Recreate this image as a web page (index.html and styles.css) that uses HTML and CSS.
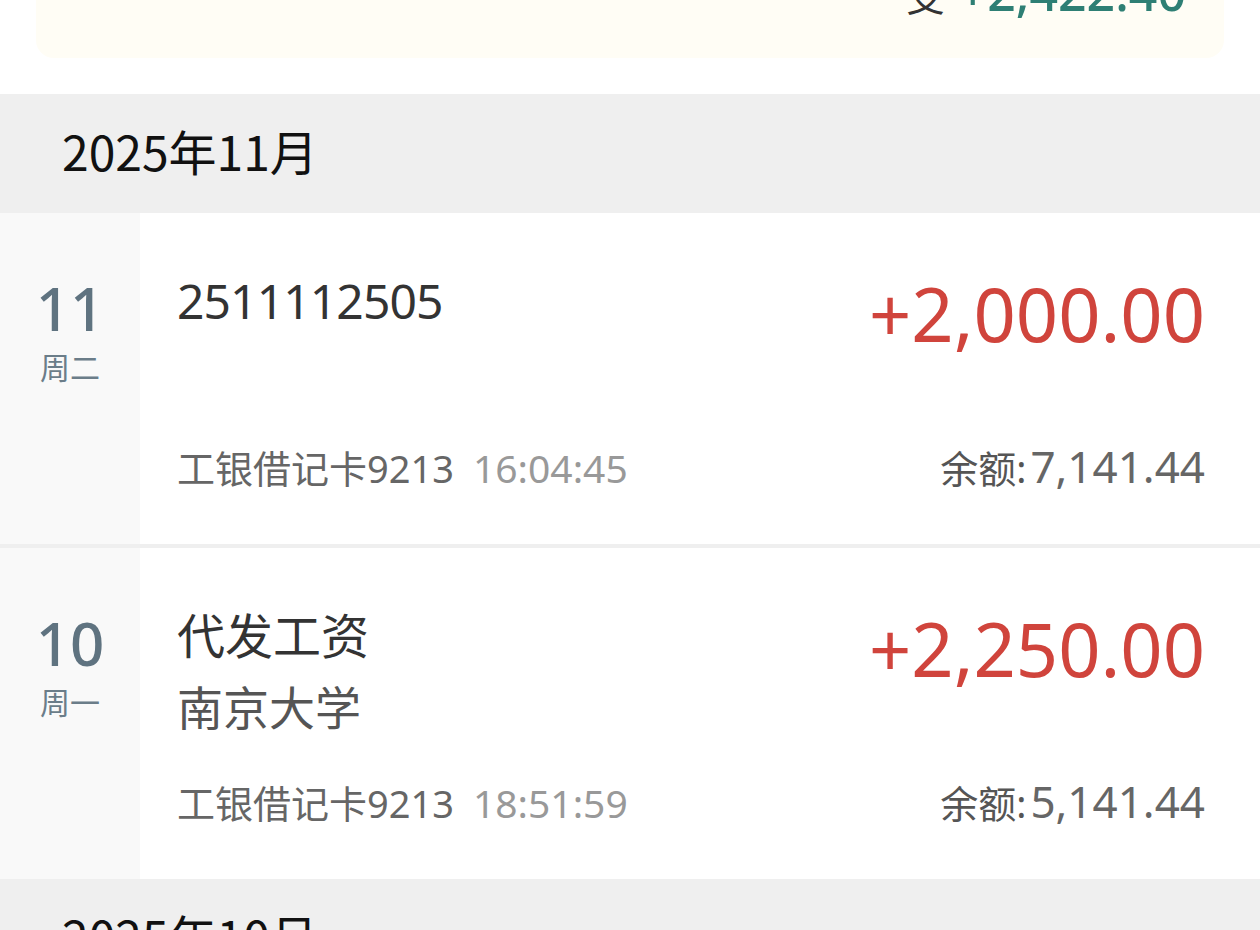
FILE: index.html
```html
<!DOCTYPE html>
<html lang="zh-CN">
<head>
<meta charset="utf-8">
<title>账单明细</title>
<link rel="stylesheet" href="styles.css">
</head>
<body>
  <div class="summary">
    <div class="summary-line">
      <span class="summary-label">支</span>
      <span class="summary-amount">+2,422.40</span>
    </div>
  </div>

  <section class="month">
    <div class="month-head">2025年11月</div>

    <div class="txn">
      <div class="date">
        <div class="day">11</div>
        <div class="week">周二</div>
      </div>
      <div class="body">
        <div class="top">
          <div class="desc">
            <div class="title title-num">2511112505</div>
          </div>
          <div class="amount">+2,000.00</div>
        </div>
        <div class="meta">
          <div class="card">工银借记卡9213<span class="time">16:04:45</span></div>
          <div class="balance"><span class="bal-label">余额:</span><span class="bal-num">7,141.44</span></div>
        </div>
      </div>
    </div>

    <div class="txn">
      <div class="date">
        <div class="day">10</div>
        <div class="week">周一</div>
      </div>
      <div class="body">
        <div class="top">
          <div class="desc">
            <div class="title">代发工资</div>
            <div class="subtitle">南京大学</div>
          </div>
          <div class="amount">+2,250.00</div>
        </div>
        <div class="meta">
          <div class="card">工银借记卡9213<span class="time">18:51:59</span></div>
          <div class="balance"><span class="bal-label">余额:</span><span class="bal-num">5,141.44</span></div>
        </div>
      </div>
    </div>
  </section>

  <section class="month">
    <div class="month-head">2025年10月</div>
  </section>
</body>
</html>
```
FILE: styles.css
```css
html, body {
  margin: 0;
  padding: 0;
  background: #ffffff;
}
body {
  font-family: "Noto Sans", "Noto Sans CJK SC", sans-serif;
  color: #333;
  overflow: hidden;
}

.summary {
  margin: -38px 36px 36px;
  padding: 0 38px 32px 0;
  background: #fffdf5;
  border-radius: 0 0 18px 18px;
}
.summary-line {
  display: flex;
  justify-content: flex-end;
  align-items: baseline;
  line-height: 60px;
}
.summary-label {
  font-size: 38px;
  color: #333;
  margin-right: 14px;
}
.summary-amount {
  font-size: 50px;
  color: #2e7f74;
  font-weight: 500;
}

.month-head {
  height: 119px;
  box-sizing: border-box;
  display: flex;
  align-items: center;
  padding: 0 0 7px 62px;
  background: #efefef;
  font-family: "Noto Sans CJK SC", sans-serif;
  font-size: 48px;
  color: #111;
}

.txn {
  display: grid;
  grid-template-columns: 140px 1fr;
  border-bottom: 4px solid #efefef;
}
.txn:last-child {
  border-bottom: none;
}

.date {
  background: #f9f9f9;
  text-align: center;
  padding-top: 60px;
}
.day {
  font-size: 60px;
  line-height: 70px;
  font-weight: 500;
  color: #5f7380;
}
.week {
  margin-top: 5px;
  font-size: 30px;
  line-height: 40px;
  color: #6b7d89;
}

.body {
  padding: 58px 55px 53px 37px;
}
.top {
  min-height: 170px;
  display: flex;
  justify-content: space-between;
  align-items: flex-start;
}
.title {
  font-size: 48px;
  line-height: 60px;
  color: #333;
}
.title-num {
  letter-spacing: -0.9px;
}
.subtitle {
  margin-top: 11px;
  font-size: 46px;
  line-height: 60px;
  color: #555;
}
.amount {
  margin-top: 3px;
  font-size: 74px;
  line-height: 80px;
  color: #d0443c;
}

.meta {
  height: 50px;
  display: flex;
  justify-content: space-between;
  align-items: baseline;
  line-height: 50px;
}
.card {
  font-size: 38px;
  color: #666;
}
.time {
  margin-left: 19px;
  color: #999;
  font-size: 39px;
}
.balance {
  display: flex;
  align-items: baseline;
}
.bal-label {
  font-size: 38px;
  color: #555;
  margin-right: 4px;
}
.bal-num {
  font-size: 44px;
  color: #666;
}
```
